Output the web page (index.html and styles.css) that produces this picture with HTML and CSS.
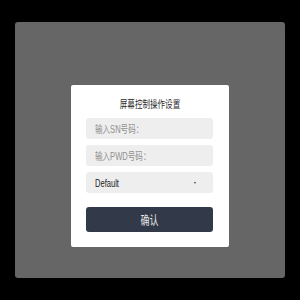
FILE: index.html
```html
<!DOCTYPE html>
<html lang="zh-CN">
<head>
    <meta charset="UTF-8">
    <meta name="viewport" content="width=device-width, initial-scale=1.0">
    <title>屏幕控制操作设置</title>
    <link rel="stylesheet" href="styles.css">
</head>
<body>
    <div class="overlay">
        <div class="dialog">
            <div class="title"><span class="squeeze">屏幕控制操作设置</span></div>

            <div class="field placeholder"><span class="squeeze">输入SN号码：</span></div>
            <div class="field placeholder"><span class="squeeze">输入PWD号码：</span></div>
            <div class="field select">
                <span class="squeeze">Default</span>
                <span class="arrow"></span>
            </div>

            <button class="confirm"><span class="squeeze">确认</span></button>
        </div>
    </div>
</body>
</html>
```

FILE: styles.css
```css
* {
    margin: 0;
    padding: 0;
    box-sizing: border-box;
    font-family: 'Liberation Sans', Arial, 'Noto Sans CJK SC', sans-serif;
}

body {
    background-color: #000;
    width: 300px;
    height: 300px;
    padding: 22px 15px;
}

.overlay {
    height: 256px;
    background-color: #666;
    border-radius: 3px;
    display: flex;
    flex-direction: column;
    align-items: center;
    padding-top: 63px;
}

.dialog {
    width: 158px;
    background-color: #fff;
    border-radius: 2px;
    padding: 12px 16px 15px 15px;
    display: flex;
    flex-direction: column;
}

.squeeze {
    display: inline-block;
    transform: scaleX(0.72);
    transform-origin: left center;
    white-space: nowrap;
}

.title {
    text-align: center;
    font-size: 10.5px;
    line-height: 14px;
    color: #2b2b2b;
    margin-bottom: 7px;
}

.title .squeeze {
    transform-origin: center;
}

.field {
    height: 21px;
    background-color: #eee;
    border-radius: 3px;
    padding-left: 9px;
    font-size: 10.5px;
    display: flex;
    align-items: center;
    margin-bottom: 6px;
}

.placeholder {
    color: #8f8f8f;
}

.select {
    color: #222;
    justify-content: space-between;
    padding-right: 17px;
    margin-bottom: 14px;
}

.arrow {
    width: 0;
    height: 0;
    border-left: 1.5px solid transparent;
    border-right: 1.5px solid transparent;
    border-top: 2px solid #444;
}

.confirm {
    height: 25px;
    border: none;
    border-radius: 3px;
    background-color: #323a4a;
    color: #e6e6e6;
    font-size: 12.5px;
    font-family: 'Noto Sans CJK SC', sans-serif;
}

.confirm .squeeze {
    transform-origin: center;
}
```
